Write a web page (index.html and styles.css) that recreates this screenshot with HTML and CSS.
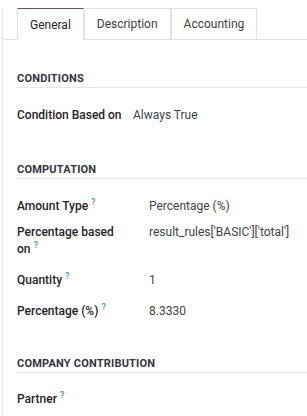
FILE: index.html
```html
<!DOCTYPE html>
<html>
<head>
<meta charset="utf-8">
<link rel="stylesheet" href="styles.css">
</head>
<body>
<div class="sheet">
  <nav class="tabs">
    <span class="tab active">General</span>
    <span class="tab">Description</span>
    <span class="tab">Accounting</span>
  </nav>

  <section class="group group-conditions">
    <h3 class="group-title">Conditions</h3>
    <div class="row row-first">
      <span class="label">Condition Based on</span>
      <span class="value">Always True</span>
    </div>
  </section>

  <section class="group group-computation">
    <h3 class="group-title">Computation</h3>
    <div class="row row-first">
      <span class="label">Amount Type<sup>?</sup></span>
      <span class="value">Percentage (%)</span>
    </div>
    <div class="row row-based">
      <span class="label">Percentage based on<sup>?</sup></span>
      <span class="value">result_rules['BASIC']['total']</span>
    </div>
    <div class="row row-qty">
      <span class="label">Quantity<sup>?</sup></span>
      <span class="value">1</span>
    </div>
    <div class="row row-pct">
      <span class="label">Percentage (%)<sup>?</sup></span>
      <span class="value">8.3330</span>
    </div>
  </section>

  <section class="group group-company">
    <h3 class="group-title">Company Contribution</h3>
    <div class="row row-first">
      <span class="label">Partner<sup>?</sup></span>
      <span class="value"></span>
    </div>
  </section>
</div>
</body>
</html>
```

FILE: styles.css
```css
html, body {
  margin: 0;
  padding: 0;
  background: #ffffff;
}

body {
  font-family: Roboto, "Liberation Sans", sans-serif;
  font-size: 12px;
  color: #1f2328;
  padding-left: 2px;
  height: 416px;
  overflow: hidden;
}

.sheet {
  border-left: 1px solid #e3e5e8;
  min-height: 416px;
}

.tabs {
  display: flex;
  margin-top: 8px;
  padding-left: 14px;
  border-bottom: 1px solid #dee2e6;
  height: 31px;
}

.tab {
  display: flex;
  align-items: center;
  padding: 0 12px;
  border: 1px solid #dee2e6;
  border-bottom: none;
  color: #3a3f45;
  height: 31px;
  box-sizing: border-box;
  background: #fff;
  font-size: 12px;
}

.tab.active {
  border-top: 1px solid #714b67;
  color: #1f2328;
  height: 32px;
  margin-bottom: -1px;
}

.group {
  padding-left: 14px;
}

.group-title {
  margin: 0;
  font-size: 11px;
  font-weight: 700;
  text-transform: uppercase;
  letter-spacing: 0.2px;
  line-height: 16px;
  color: #2e3440;
  border-bottom: 1px solid #e5e7ea;
}

.group-conditions .group-title { margin-top: 31px; }
.group-computation .group-title { margin-top: 38px; }
.group-company .group-title { margin-top: 36px; }

.row {
  display: grid;
  grid-template-columns: 132px 1fr;
  line-height: 17px;
}

.group-conditions .row {
  grid-template-columns: 116px 1fr;
}

.group-conditions .label {
  padding-right: 0;
  white-space: nowrap;
}

.row-first { margin-top: 19px; }
.row-based { margin-top: 9px; }
.row-qty { margin-top: 14px; }
.row-pct { margin-top: 14px; }
.group-company .row-first { margin-top: 18px; }

.label {
  font-weight: 500;
  color: #1f2328;
  padding-right: 18px;
}

.value {
  color: #3d4248;
}

sup {
  font-size: 9px;
  font-weight: 500;
  color: #3a8fc7;
  margin-left: 3px;
  vertical-align: 5px;
  line-height: 0;
}
```
